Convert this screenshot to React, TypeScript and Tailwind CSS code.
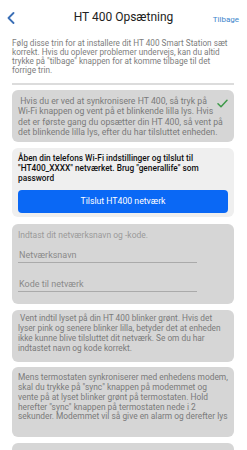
import React from 'react';

function Card({ children, className = '' }: { children: React.ReactNode; className?: string }) {
  return <div className={`relative rounded-md px-[6px] ${className}`}>{children}</div>;
}

export default function App() {
  return (
    <div className="w-[247px] h-[450px] overflow-hidden bg-white font-['Roboto',Arial,sans-serif]">
      {/* header */}
      <div className="relative flex items-center justify-center h-[34px]">
        <svg className="absolute left-[7px] top-[12px]" width="8" height="12" viewBox="0 0 8 12" fill="none">
          <path d="M6.5 1 L1.5 6 L6.5 11" stroke="#3b6fb6" strokeWidth="1.8" strokeLinecap="round" strokeLinejoin="round" />
        </svg>
        <span className="text-[12px] text-[#222]">HT 400 Opsætning</span>
        <span className="absolute right-[8px] top-[14px] text-[8px] text-[#3d85cc]">Tilbage</span>
      </div>

      <div className="pl-[12px] pr-[13px] pt-[5px]">
        <p className="text-[8.2px] leading-[9px] text-[#7d7d7d]">
          Følg disse trin for at installere dit HT 400 Smart Station sæt korrekt. Hvis du oplever problemer undervejs, kan du altid trykke på "tilbage" knappen for at komme tilbage til det forrige trin.
        </p>
        <div className="mt-[8px] h-[2px] bg-[#dcdcdc]" />

        <div className="mt-[5px] flex flex-col">
          <Card className="bg-[#d6d6d6] pt-[6px] pb-[5px]">
            <p className="text-[8.7px] leading-[10.3px] text-[#7a7a7a]">
              {'\u00a0'}Hvis du er ved at synkronisere HT 400, så tryk på<br />
              Wi‑Fi knappen og vent på et blinkende lilla lys. Hvis<br />
              det er første gang du opsætter din HT 400, så vent på<br />
              det blinkende lilla lys, efter du har tilsluttet enheden.
            </p>
            <svg className="absolute right-[6px] top-[9px]" width="11" height="9" viewBox="0 0 11 9" fill="none">
              <path d="M1 4.8 L4 7.8 L10 1.2" stroke="#3f9a4a" strokeWidth="1.5" strokeLinecap="round" strokeLinejoin="round" />
            </svg>
          </Card>

          <Card className="mt-[6px] bg-[#efefef] pt-[5px] pb-[4px]">
            <p className="text-[8.3px] leading-[10px] text-[#111] font-medium">
              Åben din telefons Wi-Fi indstillinger og tilslut til "HT400_XXXX" netværket. Brug "generallife" som password
            </p>
            <button className="mt-[7px] w-full h-[23px] rounded-[4px] bg-[#0a68f5] text-white text-[8.7px]">
              Tilslut HT400 netværk
            </button>
          </Card>

          <Card className="mt-[7px] bg-[#d6d6d6] pt-[6px] pb-[12px]">
            <p className="text-[8.5px] leading-[10px] text-[#9a9a9a]">Indtast dit netværksnavn og -kode.</p>
            <div className="mt-[9px] w-[179px] border-b border-[#aaaaaa] pb-[1px] text-[9px] leading-[12px] text-[#8a8a8a] pl-[1px]">
              Netværksnavn
            </div>
            <div className="mt-[15px] w-[179px] border-b border-[#aaaaaa] pb-[1px] text-[9px] leading-[12px] text-[#8a8a8a] pl-[1px]">
              Kode til netværk
            </div>
          </Card>

          <Card className="mt-[6px] bg-[#d6d6d6] pt-[3px] pb-[9px]">
            <p className="text-[8.3px] leading-[10px] text-[#7a7a7a]">
              {'\u00a0'}Vent indtil lyset på din HT 400 blinker grønt. Hvis det lyser pink og senere blinker lilla, betyder det at enheden ikke kunne blive tilsluttet dit netværk. Se om du har indtastet navn og kode korrekt.
            </p>
          </Card>

          <Card className="mt-[5px] bg-[#d6d6d6] pt-[6px] h-[70px]">
            <p className="text-[8.4px] leading-[9.8px] text-[#7a7a7a]">
              Mens termostaten synkroniserer med enhedens modem,<br />
              skal du trykke på "sync" knappen på modemmet og<br />
              vente på at lyset blinker grønt på termostaten. Hold<br />
              herefter "sync" knappen på termostaten nede i 2<br />
              sekunder. Modemmet vil så give en alarm og derefter lys
            </p>
          </Card>

          <Card className="mt-[6px] bg-[#d6d6d6] h-[40px]">
            <span />
          </Card>
        </div>
      </div>
    </div>
  );
}
